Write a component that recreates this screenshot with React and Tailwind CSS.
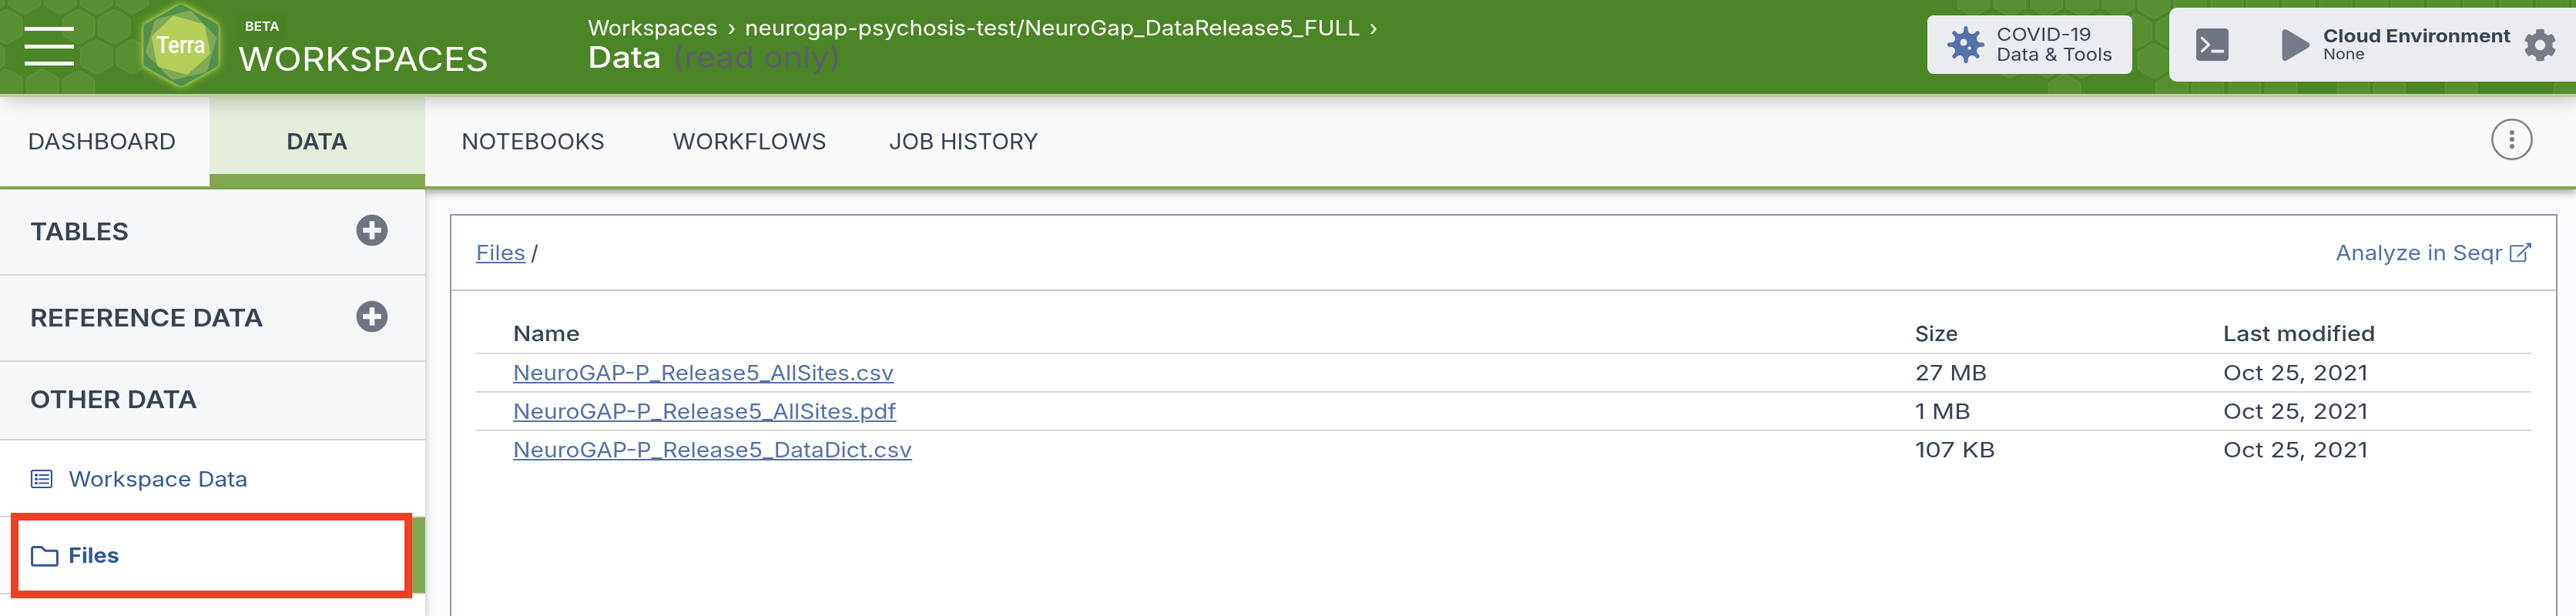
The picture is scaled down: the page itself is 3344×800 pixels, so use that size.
import React from 'react';
import { FaCog, FaPlay, FaPlusCircle, FaVirus } from 'react-icons/fa';

// Centres of the honeycomb cells drawn behind the top bar.
const CELLS = [
  [-15, -4], [32, -4], [78.5, -4], [125.3, -4], [172, -4],
  [8.3, 34.7], [102, 34.7], [148.3, 34.7],
  [-15, 73.7], [125.3, 73.7], [172, 73.7],
  [8.3, 112], [55, 112], [102, 114],
  [2562, -1], [2609, -1], [2656.7, -1], [2703, -1], [2750, -1], [2796, 1.7],
  [2843, 2], [2891, 2], [2937, 2], [2984, 2], [3032, 2], [3079, 2], [3125, 2],
  [3172, 2], [3218, 2], [3266, 2], [3313, 2], [3360, 2],
  [2585, 40.5], [2632, 40.5], [2679, 40.5], [2726, 40.5], [2772.7, 40.5], [2819.5, 40.5],
  [2609, 79], [2656.7, 79], [2703, 79], [2796, 79],
  [2680, 118.5], [2819.5, 118.5], [2866, 118.5], [2914, 118.5], [2961, 118.5],
  [3055, 118.5], [3102, 118.5], [3195, 118.5], [3336, 118.5],
];

const CELL_PATH =
  'M-3 -21.2 Q0 -22.6 3 -21.2 L18 -12.6 Q20.7 -11 20.7 -8 V8 Q20.7 11 18 12.6 L3 21.2 Q0 22.6 -3 21.2 L-18 12.6 Q-20.7 11 -20.7 8 V-8 Q-20.7 -11 -18 -12.6 Z';

function Honeycomb() {
  return (
    <svg className="absolute left-0 top-0" width="3344" height="122" viewBox="0 0 3344 122">
      {CELLS.map(([x, y]) => (
        <path
          key={`${x}:${y}`}
          d={CELL_PATH}
          transform={`translate(${x} ${y})`}
          fill="#568e30"
          stroke="#60963a"
          strokeWidth="1.2"
        />
      ))}
    </svg>
  );
}

function TerraLogo() {
  return (
    <svg className="block shrink-0 overflow-visible" width="150" height="122" viewBox="0 0 450 366">
      <g className="[filter:drop-shadow(0_0_6px_#b9d84c)_drop-shadow(0_0_16px_#a9cc44)]" strokeLinejoin="round">
        <polygon
          points="225,38 351,108 351,245 225,315 99,245 99,108"
          fill="#4f914d"
          stroke="#4f914d"
          strokeWidth="40"
        />
      </g>
      <g strokeLinejoin="round">
        <polygon
          points="257,60 345,151 312,265 195,293 106,202 138,90"
          fill="#80aa55"
          stroke="#80aa55"
          strokeWidth="36"
        />
        <polygon
          points="199,76 304,106 325,204 246,276 145,248 125,147"
          fill="#b5ce57"
          stroke="#b5ce57"
          strokeWidth="28"
        />
      </g>
      <text
        x="129"
        y="208"
        fill="#fff"
        fontFamily="Roboto, sans-serif"
        fontWeight="500"
        fontSize="94"
        textLength="190"
        lengthAdjust="spacingAndGlyphs"
      >
        Terra
      </text>
    </svg>
  );
}

function TerminalIcon() {
  return (
    <svg width="42" height="42" viewBox="0 0 42 42">
      <rect width="42" height="42" rx="4.5" fill="#6e7480" />
      <path d="M7.5 12.5 L16.5 21 L7.5 29.5" fill="none" stroke="#ebecf0" strokeWidth="3.4" strokeLinecap="round" strokeLinejoin="round" />
      <path d="M19.5 29.5 H36" stroke="#ebecf0" strokeWidth="4" />
    </svg>
  );
}

function MoreIcon() {
  return (
    <svg width="54" height="54" viewBox="0 0 54 54">
      <circle cx="27" cy="27" r="25.7" fill="none" stroke="#7b818d" strokeWidth="2.6" />
      <circle cx="27" cy="18" r="3.1" fill="#7b818d" />
      <circle cx="27" cy="27" r="3.1" fill="#7b818d" />
      <circle cx="27" cy="36" r="3.1" fill="#7b818d" />
    </svg>
  );
}

function ListIcon() {
  return (
    <svg width="28" height="24" viewBox="0 0 28 24" fill="none" stroke="#335896" strokeWidth="2">
      <rect x="1" y="1" width="26" height="22" rx="2" strokeWidth="2.2" />
      <path d="M11 7 H23 M11 12.2 H23 M11 17.4 H23" strokeLinecap="round" />
      <path d="M7 7 V7.01 M7 12.2 V12.21 M7 17.4 V17.41" strokeWidth="3.8" strokeLinecap="round" />
      <path d="M6 7 H9 M6 12.2 H9 M6 17.4 H9" strokeWidth="1.4" />
    </svg>
  );
}

function FolderIcon() {
  return (
    <svg width="36" height="27" viewBox="0 0 36 27" fill="none" stroke="#335896" strokeWidth="3">
      <path d="M3.5 1.6 H14 L19 6.3 H32.5 Q34.4 6.3 34.4 8.2 V23.4 Q34.4 25.3 32.5 25.3 H3.5 Q1.6 25.3 1.6 23.4 V3.5 Q1.6 1.6 3.5 1.6 Z" strokeLinejoin="round" />
    </svg>
  );
}

function PopOutIcon() {
  return (
    <svg width="28" height="26" viewBox="0 0 28 26" fill="none" stroke="#5471a9">
      <path d="M18 4.3 H3 Q1.1 4.3 1.1 6.2 V22.3 Q1.1 24.3 3 24.3 H18.4 Q20.3 24.3 20.3 22.3 V12" strokeWidth="2.1" />
      <path d="M10.5 17.5 L23.5 5" strokeWidth="2.4" strokeLinecap="round" />
      <path d="M20.3 0.4 H28 V8.2 Z" fill="#5471a9" stroke="none" />
    </svg>
  );
}

// A run of text set slightly extended, anchored at its left edge.
function Wide({ className, children }) {
  return <span className={`inline-block origin-left whitespace-nowrap ${className}`}>{children}</span>;
}

function TopBar() {
  return (
    <header className="relative z-20 h-[126px] shrink-0 border-b-4 border-[#bbd09e] bg-[#4b8526] text-white shadow-[6px_0_26px_rgba(0,0,0,0.3)]">
      <Honeycomb />
      <div className="relative flex h-[122px]">
        <button className="ml-8 mt-[35px] flex h-[50px] w-16 shrink-0 flex-col justify-between">
          <span className="h-[5px] w-full bg-white" />
          <span className="h-[5px] w-full bg-white" />
          <span className="h-[5px] w-full bg-white" />
        </button>
        <div className="ml-16 shrink-0">
          <TerraLogo />
        </div>
        <div className="-ml-[2px] w-[455px] shrink-0 pt-[18px]">
          <div className="flex h-8 w-16 items-center bg-[#498324] pl-2.5 text-[16px] font-semibold">
            <Wide className="scale-x-[1.09]">BETA</Wide>
          </div>
          <div className="ml-px mt-[3px] text-[42px] leading-[48px]">
            <Wide className="scale-x-[1.125]">WORKSPACES</Wide>
          </div>
        </div>
        <div className="shrink-0 pt-[19px]">
          <div className="flex text-[27px] leading-9">
            <span className="w-[170px]">
              <Wide className="scale-x-[1.065]">Workspaces</Wide>
            </span>
            <span className="w-[34px] text-center">›</span>
            <span className="w-[800px]">
              <Wide className="scale-x-[1.094]">neurogap-psychosis-test/NeuroGap_DataRelease5_FULL</Wide>
            </span>
            <span className="w-8 text-center">›</span>
          </div>
          <div className="-mt-0.5 flex text-[38.5px] leading-[42px]">
            <span className="w-[110px]">
              <Wide className="scale-x-[1.13] font-medium">Data</Wide>
            </span>
            <Wide className="scale-x-[1.107] text-[#5c5f70]">(read only)</Wide>
          </div>
        </div>
        <div className="ml-auto mt-5 flex h-[76px] w-[266px] shrink-0 items-center rounded-lg bg-[#ebecf0] pl-[26px] text-[#374253]">
          <FaVirus className="shrink-0 text-[48px] text-[#5471a9]" />
          <div className="ml-4 flex flex-col items-start text-[23px] leading-[26px]">
            <Wide className="scale-x-[1.155]">COVID-19</Wide>
            <Wide className="scale-x-[1.105]">Data &amp; Tools</Wide>
          </div>
        </div>
        <div className="ml-12 mt-2.5 flex h-24 w-[528px] shrink-0 items-center rounded-l-[10px] bg-[#ebecf0] pl-[35px] text-[#374253]">
          <TerminalIcon />
          <FaPlay className="ml-[67px] text-[41px] text-[#757b87]" />
          <div className="ml-[15px] flex w-[260px] flex-col items-start">
            <Wide className="scale-x-[1.136] text-[23px] font-bold leading-[26px]">Cloud Environment</Wide>
            <Wide className="scale-x-[1.123] text-[19px] leading-[22px]">None</Wide>
          </div>
          <FaCog className="text-[43px] text-[#757b87]" />
        </div>
      </div>
    </header>
  );
}

function TabBar() {
  return (
    <nav className="relative z-10 flex h-[120px] shrink-0 items-stretch border-b-4 border-[#81aa50] bg-[#fafafa] text-[28px] text-[#374253] shadow-[0_4px_10px_rgba(0,0,0,0.35)]">
      <a className="flex w-[272px] items-center pl-9">
        <Wide className="scale-x-[1.109]">DASHBOARD</Wide>
      </a>
      <a className="flex w-[280px] items-center border-b-[16px] border-[#81aa50] bg-[#e5eedb] pl-[100px] pt-4 font-semibold">
        <Wide className="scale-x-[1.083]">DATA</Wide>
      </a>
      <a className="ml-[47px] flex w-[274px] items-center">
        <Wide className="scale-x-[1.069]">NOTEBOOKS</Wide>
      </a>
      <a className="flex w-[281px] items-center">
        <Wide className="scale-x-[1.085]">WORKFLOWS</Wide>
      </a>
      <a className="flex items-center">
        <Wide className="scale-x-[1.05]">JOB HISTORY</Wide>
      </a>
      <button className="mb-[6px] ml-auto mr-14 flex items-center">
        <MoreIcon />
      </button>
    </nav>
  );
}

function Sidebar() {
  return (
    <aside className="relative z-10 flex w-[552px] shrink-0 flex-col bg-white text-[#374253] shadow-[0_4px_10px_rgba(0,0,0,0.25)]">
      <div className="flex h-28 items-center justify-between border-b-2 border-[#d7d8dc] bg-[#f6f7f9] pl-[39px] pr-12 text-[31px] font-semibold">
        <Wide className="scale-x-[1.095]">TABLES</Wide>
        <FaPlusCircle className="mb-1 text-[42px] text-[#6e7480]" />
      </div>
      <div className="flex h-28 items-center justify-between border-b-2 border-[#d7d8dc] bg-[#f6f7f9] pl-[39px] pr-12 text-[31px] font-semibold">
        <Wide className="scale-x-[1.125]">REFERENCE DATA</Wide>
        <FaPlusCircle className="mb-1 text-[42px] text-[#6e7480]" />
      </div>
      <div className="flex h-[102px] items-center border-b-2 border-[#d7d8dc] bg-[#f6f7f9] pb-0.5 pl-[39px] text-[31px] font-semibold">
        <Wide className="scale-x-[1.116]">OTHER DATA</Wide>
      </div>
      <div className="flex h-[100px] items-center border-b-2 border-[#d7d8dc] pl-10 pt-0.5 text-[27px] text-[#335896]">
        <span className="w-[49px]">
          <ListIcon />
        </span>
        <Wide className="mt-0.5 scale-x-[1.106]">Workspace Data</Wide>
      </div>
      <div className="relative flex h-[100px] items-center border-b-2 border-[#d7d8dc] pl-10 pt-0.5 text-[27px] text-[#335896]">
        <span className="w-[49px]">
          <FolderIcon />
        </span>
        <Wide className="mt-px scale-x-[1.068] font-bold">Files</Wide>
        <span className="-mt-0.5 ml-auto w-[17px] self-stretch bg-[#81aa50]" />
        <span className="absolute -top-[6px] left-[14px] h-[111px] w-[521px] border-[10px] border-[#ec4024]" />
      </div>
    </aside>
  );
}

const FILES = [
  { name: 'NeuroGAP-P_Release5_AllSites.csv', size: '27 MB', date: 'Oct 25, 2021', nameScale: 'scale-x-[1.097]', sizeScale: 'scale-x-[1.15]' },
  { name: 'NeuroGAP-P_Release5_AllSites.pdf', size: '1 MB', date: 'Oct 25, 2021', nameScale: 'scale-x-[1.108]', sizeScale: 'scale-x-[1.19]' },
  { name: 'NeuroGAP-P_Release5_DataDict.csv', size: '107 KB', date: 'Oct 25, 2021', nameScale: 'scale-x-[1.11]', sizeScale: 'scale-x-[1.21]' },
];

function FilePanel() {
  return (
    <main className="flex flex-1 bg-[#fafbfd] pl-8 pr-6 pt-8">
      <section className="-mb-4 flex-1 border-2 border-[#8f96a3] bg-white text-[27px] text-[#374253]">
        <div className="flex h-[98px] items-center justify-between border-b-2 border-[#cacace] px-8">
          <div className="flex pt-0.5">
            <span className="w-[71px]">
              <Wide className="scale-x-[1.09] text-[#5471a9]">
                <a className="underline decoration-2 underline-offset-2 [text-decoration-skip-ink:none]">Files</a>
              </Wide>
            </span>
            <span>/</span>
          </div>
          <a className="flex items-center text-[#5471a9]">
            <span className="w-[219px] pt-0.5">
              <Wide className="scale-x-[1.09]">Analyze in Seqr</Wide>
            </span>
            <span className="ml-[7px]">
              <PopOutIcon />
            </span>
          </a>
        </div>
        <div className="px-8 pt-[30px]">
          <div className="flex h-[52px] items-center border-b-2 border-[#d7d8dc] pl-12 pt-0.5 font-medium">
            <div className="w-[1820px]">
              <Wide className="scale-x-[1.15]">Name</Wide>
            </div>
            <div className="w-[400px]">
              <Wide className="scale-x-[1.025]">Size</Wide>
            </div>
            <Wide className="scale-x-[1.13]">Last modified</Wide>
          </div>
          {FILES.map((f) => (
            <div key={f.name} className="flex h-[50px] items-center border-b-2 border-[#d7d8dc] pl-12 pt-0.5 last:border-transparent">
              <div className="w-[1820px]">
                <Wide className={`${f.nameScale} text-[#5471a9]`}>
                  <a className="underline decoration-2 underline-offset-2">{f.name}</a>
                </Wide>
              </div>
              <div className="w-[400px]">
                <Wide className={f.sizeScale}>{f.size}</Wide>
              </div>
              <Wide className="scale-x-[1.165]">{f.date}</Wide>
            </div>
          ))}
        </div>
      </section>
    </main>
  );
}

export default function App() {
  return (
    <div className="flex h-[800px] w-full flex-col overflow-hidden bg-white font-['Inter','Open_Sans',sans-serif]">
      <TopBar />
      <TabBar />
      <div className="flex min-h-0 flex-1">
        <Sidebar />
        <FilePanel />
      </div>
    </div>
  );
}
